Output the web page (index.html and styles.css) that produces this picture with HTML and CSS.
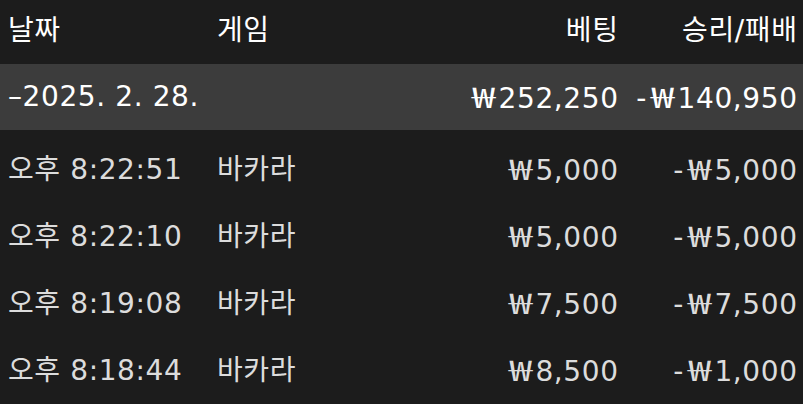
FILE: index.html
```html
<!DOCTYPE html>
<html lang="ko">
<head>
<meta charset="utf-8">
<link rel="stylesheet" href="styles.css">
</head>
<body>
<div class="table">
  <div class="row head">
    <div class="c date">날짜</div>
    <div class="c game">게임</div>
    <div class="c bet">베팅</div>
    <div class="c res">승리/패배</div>
  </div>
  <div class="row summary">
    <div class="c date">–2025. 2. 28.</div>
    <div class="c game"></div>
    <div class="c bet"><span class="won">₩</span>252,250</div>
    <div class="c res">-<span class="won">₩</span>140,950</div>
  </div>
  <div class="rows">
    <div class="row item">
      <div class="c date">오후 8:22:51</div>
      <div class="c game">바카라</div>
      <div class="c bet"><span class="won">₩</span>5,000</div>
      <div class="c res">-<span class="won">₩</span>5,000</div>
    </div>
    <div class="row item">
      <div class="c date">오후 8:22:10</div>
      <div class="c game">바카라</div>
      <div class="c bet"><span class="won">₩</span>5,000</div>
      <div class="c res">-<span class="won">₩</span>5,000</div>
    </div>
    <div class="row item">
      <div class="c date">오후 8:19:08</div>
      <div class="c game">바카라</div>
      <div class="c bet"><span class="won">₩</span>7,500</div>
      <div class="c res">-<span class="won">₩</span>7,500</div>
    </div>
    <div class="row item">
      <div class="c date">오후 8:18:44</div>
      <div class="c game">바카라</div>
      <div class="c bet"><span class="won">₩</span>8,500</div>
      <div class="c res">-<span class="won">₩</span>1,000</div>
    </div>
  </div>
</div>
</body>
</html>
```
FILE: styles.css
```css
html, body {
  margin: 0;
  padding: 0;
  background: #1c1c1c;
  overflow: hidden;
}
body {
  width: 803px;
  height: 404px;
  font-family: "DejaVu Sans", "Noto Sans CJK KR", sans-serif;
  font-size: 28px;
}
.table {
  display: flex;
  flex-direction: column;
}
.row {
  display: grid;
  grid-template-columns: 209px 120px 1fr 179px;
  align-items: center;
  padding: 0 6px 0 8px;
}
.c {
  white-space: nowrap;
  line-height: 1;
  letter-spacing: 0.6px;
}
.won {
  display: inline-block;
  font-family: "Noto Sans CJK KR", sans-serif;
  transform: scaleX(1.5);
  margin: 0 7px 0 8px;
  letter-spacing: 0;
}
.bet, .res {
  text-align: right;
  margin-right: -0.6px;
}
.head {
  height: 62px;
  padding-bottom: 2px;
  color: #ffffff;
}
.summary {
  height: 66px;
  background: #3c3c3c;
  color: #ffffff;
}
.rows {
  display: flex;
  flex-direction: column;
  padding-top: 6px;
}
.item {
  height: 67px;
  color: #dcdcdc;
}
```
